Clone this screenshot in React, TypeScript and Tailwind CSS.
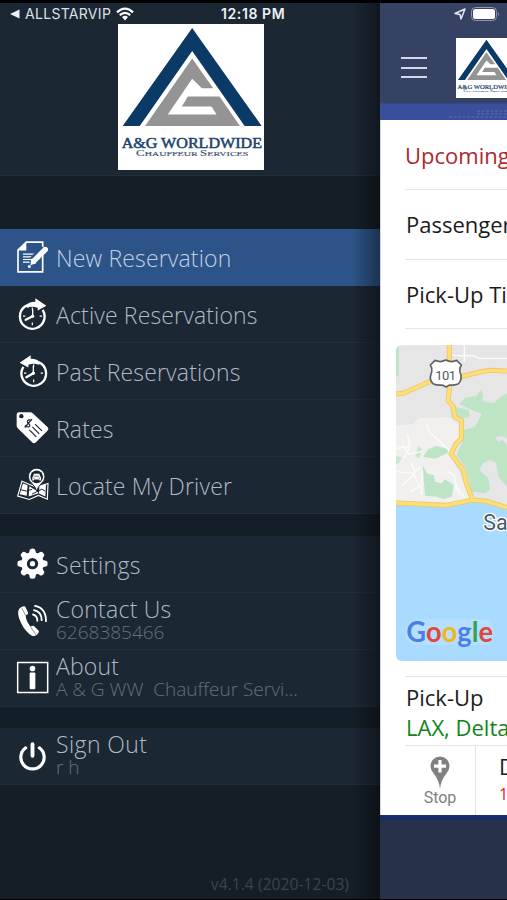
import type { ReactNode } from 'react';

const NewIcon = () => (
    <svg viewBox="48 61.5 102 102" className="w-[34px] h-[34px] shrink-0">
        <path d="M79 68H128V157H54V92Z" fill="none" stroke="#fff" strokeWidth="5" />
        <path d="M54 93L79 67V93Z" fill="#fff" />
        <path d="M69 104H107M69 112H102M69 120H96M69 128H89" stroke="#fff" strokeWidth="3.4" />
        <path d="M98 122L132 86" stroke="#2d5488" strokeWidth="22" />
        <path d="M101 125L136 90" stroke="#fff" strokeWidth="16" strokeLinecap="round" />
        <path d="M95 117L109 131L91 137Z" fill="#fff" />
        <circle cx="88" cy="141" r="4.500" fill="#fff" />
    </svg>
);

const ClockIcon = ({ past = false }: { past?: boolean }) => (
    <svg viewBox="48 232.5 102 102" className={`w-[34px] h-[34px] shrink-0 ${past ? '-scale-x-100' : ''}`}>
        <path d="M128 271A37 37 0 1 1 106 255" fill="none" stroke="#fff" strokeWidth="7" />
        <path d="M76 260Q88 246 106 247V236L139 259L113 273V265Q96 259 82 265Z" fill="#fff" />
        <path d="M97 264V271M97 309V317M69 290H76M119 290H126" stroke="#fff" strokeWidth="3.5" />
        <path d="M98 268V289" stroke="#fff" strokeWidth="4" />
        {past ? (
            <path d="M98 290L119 302" stroke="#fff" strokeWidth="7" strokeLinecap="round" />
        ) : (
            <path d="M98 290L77 301" stroke="#fff" strokeWidth="7" strokeLinecap="round" />
        )}
        <circle cx="98" cy="290" r="5" fill="#fff" />
    </svg>
);

const TagIcon = () => (
    <svg viewBox="48 94.5 102 102" className="w-[34px] h-[34px] shrink-0">
        <path
            d="M57 98L90 98Q95 98 99 102L143 143Q148 148 143 153L107 189Q102 194 97 189L54 147Q50 143 50 138L50 106Q50 98 57 98Z"
            fill="#fff"
        />
        <circle cx="64" cy="110" r="6.500" fill="#1b2733" />
        <path d="M95 123Q85 118 82 125Q81 131 87 133Q92 138 87 142Q81 144 75 138M96 119L74 144" fill="none" stroke="#1b2733" strokeWidth="3.500" />
        <path d="M105 134L126 154M97 142L118 163M88 151L109 172" stroke="#1b2733" strokeWidth="3.5" />
    </svg>
);

const LocateIcon = () => (
    <svg viewBox="48 265.5 102 102" className="w-[34px] h-[34px] shrink-0">
        <path d="M66 305L80 311L109 323L144 312L142 359L115 348L88 360L53 350Z" fill="#1b2733" stroke="#fff" strokeWidth="3.5" />
        <path d="M69 312L83 317L80 349L59 344ZM88 320L109 333L116 341L86 351ZM118 319L138 316L136 351L117 342Z" fill="#fff" />
        <path d="M60 330L80 335L97 329M96 344L125 329L136 335" fill="none" stroke="#1b2733" strokeWidth="3" />
        <path d="M110 334Q106 322 95 311A25 25 0 1 1 125 311Q114 322 110 334Z" fill="#fff" stroke="#1b2733" strokeWidth="3" />
        <circle cx="110" cy="292" r="19" fill="#1b2733" />
        <path d="M99 291L102 283H118L121 291L123 293V303H118V300H102V303H97V293Z" fill="#fff" />
        <path d="M103 290H117M100 296H104M116 296H120" stroke="#1b2733" strokeWidth="2" />
    </svg>
);

const TEETH = [0, 45, 90, 135, 180, 225, 270, 315];

const GearIcon = () => (
    <svg viewBox="48 52.5 102 102" className="w-[34px] h-[34px] shrink-0">
        {TEETH.map((a) => (
            <path key={a} d="M86 76L89 62Q90 57 97.500 57Q105 57 106 62L109 76Z" fill="#fff" transform={`rotate(${a} 97.5 102.5)`} />
        ))}
        <circle cx="97.5" cy="102.5" r="25.500" fill="none" stroke="#fff" strokeWidth="17" />
        <circle cx="97.5" cy="102.5" r="8" fill="#fff" />
    </svg>
);

const PhoneIcon = () => (
    <svg viewBox="48 223.5 102 102" className="w-[34px] h-[34px] shrink-0">
        <path
            d="M68 231L73 230Q76 231 77 234L84 249Q85 253 82 255L77 258Q77 272 91 291L99 289Q102 289 104 292L116 304Q118 307 115 311Q110 319 101 320Q89 319 70 293Q51 261 55 244Q57 235 68 231Z"
            fill="#fff"
        />
        <path d="M65 235L77 258M91 291L107 315" stroke="#1b2733" strokeWidth="1.500" />
        <path d="M99 255Q112 258 112 274M102 242Q125 247 125 272M105 229Q138 235 138 275" fill="none" stroke="#fff" strokeWidth="5.500" strokeLinecap="round" />
    </svg>
);

const InfoIcon = () => (
    <svg viewBox="48 64.5 102 102" className="w-[34px] h-[34px] shrink-0">
        <rect x="53" y="69" width="90" height="90" fill="none" stroke="#fff" strokeWidth="4.500" />
        <circle cx="97.5" cy="87" r="8.500" fill="#fff" />
        <rect x="89" y="99" width="17" height="50" rx="3" fill="#fff" />
    </svg>
);

const PowerIcon = () => (
    <svg viewBox="48 298.5 102 102" className="w-[34px] h-[34px] shrink-0">
        <path d="M77 325A35 35 0 1 0 118 325" fill="none" stroke="#fff" strokeWidth="9.500" strokeLinecap="round" />
        <path d="M97.500 314V349" stroke="#fff" strokeWidth="11.500" strokeLinecap="round" />
    </svg>
);

const Logo = ({ className }: { className: string }) => (
    <svg viewBox="53 26 437 437" className={className}>
        <rect x="53" y="26" width="437" height="437" fill="#fff" />
        <path d="M275 38L483 331H432L275 107L118 331H67Z" fill="#0b3a66" />
        <path
            d="M275 129L338 218H304L275 190L202 297H348L333 273H244L262 243H357L418 331H134Z"
            fill="#949494"
        />
        <text x="64" y="396" textLength="420" lengthAdjust="spacingAndGlyphs" fontSize="42" fill="#20446f" stroke="#20446f" strokeWidth="1.500" fontFamily="Liberation Serif, serif">
            A&amp;G WORLDWIDE
        </text>
        <text x="107" y="421" textLength="336" lengthAdjust="spacingAndGlyphs" fontSize="21" fill="#3f5570" stroke="#3f5570" strokeWidth="0.500" fontFamily="Liberation Serif, serif">
            <tspan fontSize="27">C</tspan>HAUFFEUR <tspan fontSize="27">S</tspan>ERVICES
        </text>
    </svg>
);

const ROADS =
    'M108 192L130 190L215 152L300 141L355 127L390 121L441 123M268 45V180L264 212L280 230L284 260L305 272L304 325L287 343L273 371L310 420L319 460L338 510M108 519L258 526L338 510L380 514L441 533';

const AreaMap = () => (
    <svg viewBox="108 45 333 948" className="w-[111px] h-[316px] block">
        <rect x="108" y="45" width="333" height="945" fill="#e6e6e6" />
        <path d="M108 285L160 283L176 264L270 262L300 290L300 340L270 375L340 515L108 520Z" fill="#f1f0ee" />
        <path d="M108 45H117V135L108 142Z" fill="#bfe3c8" />
        <path
            d="M298 222L315 203L350 198L361 181L371 192L366 213L402 220L425 198L441 190V325L425 318L405 322L414 335L428 330L441 345V470L415 440L408 398L390 390L370 398L358 420L385 445L390 480L375 490L335 485L318 415L290 375L305 340L312 300L345 290L365 252L325 235Z"
            fill="#bde4c5"
        />
        <path d="M268 210L290 232L325 240L330 260L300 268L275 262Z" fill="#bde4c5" />
        <path d="M189 380L205 358L230 348L265 358L262 370L225 386Z" fill="#bde4c5" />
        <path d="M188 405L200 430L222 436L225 455L245 460L255 448L282 466L275 500L250 508L230 500L195 497Z" fill="#bde4c5" />
        <path d="M108 378L126 382L118 398L108 404ZM175 348L185 355L180 385L165 380Z" fill="#c9e8cf" />
        <path d="M313 45V95M275 76L345 78L355 85H441M198 280L207 305L264 358L275 370M108 355L150 350L142 310M125 345L146 372L185 365M150 350L132 385M108 425L160 430L182 410M155 400L165 430L125 468M186 420L184 495M160 430L180 470L150 485M262 425L282 435L290 470L312 500M282 466L300 495" fill="none" stroke="#fcfcfc" strokeWidth="4" />
        <path d="M108 520L258 526L338 510L380 514L441 533V993H108Z" fill="#a9daff" />
        <g fill="none" strokeLinejoin="round">
            <path d={ROADS} stroke="#ecc766" strokeWidth="15" />
            <path d={ROADS} stroke="#fddf78" strokeWidth="10" />
        </g>
        <path
            d="M225 91Q241 99 257 90Q275 99 290 91L304 105Q296 119 302 132Q307 151 294 162Q280 167 269 165L258 171L247 165Q233 167 219 161Q207 150 213 132Q219 118 211 105Z"
            fill="#fff"
            stroke="#606266"
            strokeWidth="5"
            strokeLinejoin="round"
        />
        <text x="226" y="149" textLength="62" fontSize="39" fill="#55585c" fontFamily="Roboto, sans-serif">101</text>
        <text x="370" y="599" fontSize="64" fill="#4d5965" stroke="#fff" strokeWidth="8" paintOrder="stroke" strokeLinejoin="round" fontFamily="Roboto, sans-serif">Santa</text>
        {/* pale halo under the wordmark */}
        <rect x="137" y="868" width="264" height="78" rx="34" fill="#c0e3ff" opacity="0.6" />
        <text x="139" y="936" textLength="260" lengthAdjust="spacingAndGlyphs" fontSize="84" fontWeight="700" fontFamily="Lato, sans-serif">
            <tspan fill="#4a7fe8">G</tspan>
            <tspan fill="#df493d">o</tspan>
            <tspan fill="#f1b716">o</tspan>
            <tspan fill="#4a7fe8">g</tspan>
            <tspan fill="#35a455">l</tspan>
            <tspan fill="#df493d">e</tspan>
        </text>
    </svg>
);

type MenuRowProps = {
    icon: ReactNode;
    label: string;
    sub?: string;
    tracking?: string;
    active?: boolean;
};

function MenuRow({ icon, label, sub, tracking = 'tracking-[0.15px]', active }: MenuRowProps) {
    return (
        <div
            className={`h-[57px] pl-4 flex items-center border-b ${
                active ? 'bg-[#2d5488] border-[#2d5488]' : 'bg-[#1b2733] border-[#222e39]'
            }`}
        >
            {icon}
            <div className={`ml-1.5 font-light whitespace-pre ${sub ? 'pb-[3px]' : 'pt-px'}`}>
                <div className={`text-[23px] ${tracking} ${sub ? 'leading-[25px]' : 'leading-8'} ${active ? 'text-[#c0d0e5]' : 'text-[#b0bac3]'}`}>
                    {label}
                </div>
                {sub && <div className="text-[19px] leading-[21px] text-[#65707a]">{sub}</div>}
            </div>
        </div>
    );
}

function Drawer() {
    return (
        <aside className="relative w-[380px] shrink-0 flex flex-col bg-[#141e27]">
            <div className="h-[173px] bg-[#1b2733] border-b border-[#222e39]">
                <div className="h-[21px] flex items-center text-[#dde1e4] font-['Inter'] text-sm">
                    <svg viewBox="0 0 10 10" className="ml-2.5 w-2.5 h-2.5">
                        <path d="M0 5L9.500 0.500V9.500Z" fill="#eef1f3" />
                    </svg>
                    <span className="ml-[5px] w-[87px] tracking-[0.3px]">ALLSTARVIP</span>
                    <svg viewBox="0 0 18 14" className="ml-1 w-[18px] h-3.5">
                        <path d="M1 5.300Q9-2 17 5.300M3.800 8.200Q9 3.500 14.200 8.200" fill="none" stroke="#fff" strokeWidth="2.300" />
                        <path d="M6 10Q9 7.500 12 10L9 13.500Z" fill="#fff" />
                    </svg>
                    <span className="ml-[87px] font-semibold text-[14px] tracking-[0.6px] text-[#eef1f3] whitespace-nowrap">12:18 PM</span>
                </div>
                <Logo className="w-[146px] h-[146px] ml-[118px]" />
            </div>

            <nav className="mt-[53px]">
                <MenuRow icon={<NewIcon />} label="New Reservation" active />
                <MenuRow icon={<ClockIcon />} label="Active Reservations" />
                <MenuRow icon={<ClockIcon past />} label="Past Reservations" />
                <MenuRow icon={<TagIcon />} label="Rates" />
                <MenuRow icon={<LocateIcon />} label="Locate My Driver" />
            </nav>
            <nav className="mt-[22px]">
                <MenuRow icon={<GearIcon />} label="Settings" tracking="tracking-[0.35px]" />
                <MenuRow icon={<PhoneIcon />} label="Contact Us" sub="6268385466" tracking="tracking-[0.25px]" />
                <MenuRow icon={<InfoIcon />} label="About" sub="A & G WW  Chauffeur Servi..." />
            </nav>
            <nav className="mt-[21px]">
                <MenuRow icon={<PowerIcon />} label="Sign Out" sub="r h" tracking="tracking-[0.4px]" />
            </nav>

            <div className="mt-auto pb-[5px] pr-[31px] text-right text-[15.7px] leading-5 text-[#3b454d]">v4.1.4 (2020-12-03)</div>
            <div className="absolute inset-y-0 right-0 w-7 bg-linear-to-r from-transparent to-black/40" />
        </aside>
    );
}

function TripPanel() {
    return (
        <main className="w-[127px] shrink-0 overflow-hidden flex flex-col bg-[#27324a]">
            <header className="h-[100px] bg-[#364264]">
                <div className="h-[21px] flex items-center">
                    <svg viewBox="0 0 12 12" className="ml-[74px] w-3 h-3">
                        <path d="M1 5.500L11 1L7 11L6 6.500Z" fill="none" stroke="#e5e8f0" strokeWidth="1.500" strokeLinejoin="round" />
                    </svg>
                    <svg viewBox="0 0 30 14" className="ml-[5px] w-[30px] h-3.5 shrink-0">
                        <rect x="0.500" y="0.500" width="25" height="13" rx="4" fill="none" stroke="#9299ab" />
                        <rect x="2" y="2" width="22" height="10" rx="2.500" fill="#fff" />
                        <path d="M27 5Q29 7 27 9Z" fill="#9299ab" />
                    </svg>
                </div>
                <div className="flex items-start pt-[14px]">
                    <div className="ml-[21px] mt-[19px] w-[26px] h-[21px] flex flex-col justify-between shrink-0">
                        <span className="h-0.5 bg-[#d5d8e6]" />
                        <span className="h-0.5 bg-[#d5d8e6]" />
                        <span className="h-0.5 bg-[#d5d8e6]" />
                    </div>
                    <Logo className="ml-[29px] w-[60px] h-[60px] shrink-0" />
                </div>
            </header>
            <div className="h-[17px] bg-[#3a4f9b] border-t border-[#35488a] flex justify-end items-end">
                <svg viewBox="0 0 58 13" className="w-[58px] h-[13px]">
                    <path d="M28 4H58M28 7H58M0 10H58" stroke="#5a78ad" strokeWidth="1.500" strokeDasharray="3 1.500" opacity="0.6" />
                </svg>
            </div>

            <div className="h-[695px] bg-white border-l border-[#d4d6d9] whitespace-nowrap text-[22px] text-[#1b1b1b]">
                <div className="ml-6 h-[70px] pt-px flex items-center border-b border-[#e6e6e6] text-[#ab2a2c]">Upcoming</div>
                <div className="ml-6 pl-px h-[70px] flex items-center border-b border-[#e6e6e6]">Passenger</div>
                <div className="ml-6 pl-px h-[69px] flex items-center border-b border-[#e6e6e6]">Pick-Up Time</div>
                <div className="ml-[15px] mt-4 rounded-l-md overflow-hidden">
                    <AreaMap />
                </div>
                <div className="ml-6 pl-px mt-[15px] h-[70px] pt-[5px] border-y border-[#e6e6e6] leading-[30px]">
                    <div>Pick-Up</div>
                    <div className="text-[#108418]">LAX, Delta</div>
                </div>
                <div className="h-[69px] flex">
                    <div className="w-[95px] shrink-0 pl-6 pt-2.5 border-r border-[#dfe2e6] flex flex-col items-center text-[#808080]">
                        <svg viewBox="0 0 20 34" className="w-5 h-[34px]">
                            <path d="M10 33Q9 24 4 18Q0.500 14 0.500 10A9.500 9.500 0 0 1 19.500 10Q19.500 14 16 18Q11 24 10 33Z" fill="#808080" />
                            <path d="M10 4V16.500M4 10.200H16" stroke="#fff" strokeWidth="3.200" />
                        </svg>
                        <span className="text-base leading-4 font-['Roboto']">Stop</span>
                    </div>
                    <div className="pl-[23px] pt-1 leading-8">
                        <div>Drop-Off</div>
                        <div className="text-base text-[#e8202a]">12:00</div>
                    </div>
                </div>
            </div>
            <div className="h-[5px] bg-[#142f68]" />
        </main>
    );
}

export default function App() {
    return (
        <div className="w-[507px] h-[900px] overflow-hidden flex border-t-[3px] border-b border-black bg-black font-['Open_Sans','Noto_Sans',sans-serif]">
            <Drawer />
            <TripPanel />
        </div>
    );
}
